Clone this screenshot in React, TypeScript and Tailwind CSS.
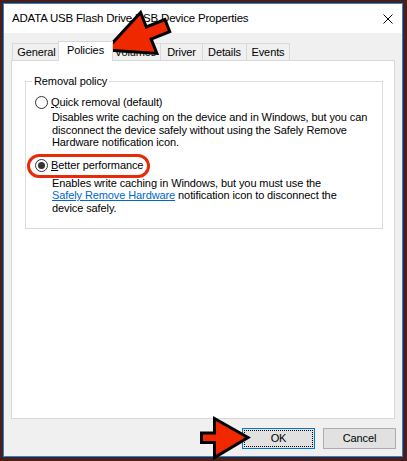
function Radio({ checked }: { checked?: boolean }) {
  return (
    <span className="w-[13px] h-[13px] rounded-full border border-[#333] bg-white flex items-center justify-center shrink-0">
      {checked && <span className="w-[7px] h-[7px] rounded-full bg-[#333]" />}
    </span>
  );
}

const tabs = ["General", "Policies", "Volumes", "Driver", "Details", "Events"];
const tabWidths: Record<string, string> = {
  General: "w-[49px]",
  Volumes: "w-[51px] -ml-px",
  Driver: "w-[43px] -ml-px",
  Details: "w-[45px] -ml-px",
  Events: "w-[44px] -ml-px",
};

export default function App() {
  return (
    <div className="relative w-[407px] h-[461px] bg-[#4b1e1e] pt-[3px] pl-[3px] font-['Liberation_Sans',Arial,sans-serif] text-[11px] tracking-[-0.1px] text-black">
      <div className="w-[400px] h-[454px] border border-[#1c8ad6] bg-[#f0f0f0] flex flex-col">
        {/* title bar */}
        <div className="h-[29px] shrink-0 bg-white flex items-center justify-between pl-[8px] pr-[9px]">
          <span className="text-[11.5px] tracking-[-0.2px] pt-[1px]">ADATA USB Flash Drive USB Device Properties</span>
          <svg width="10" height="10" viewBox="0 0 10 10">
            <path d="M0.5 0.5L9.5 9.5M9.5 0.5L0.5 9.5" stroke="#000" strokeWidth="1" fill="none" />
          </svg>
        </div>

        <div className="flex flex-col px-[7px] pt-[8px]">
          {/* tabs */}
          <div className="flex items-end h-[19px] pl-[1px]">
            {tabs.map((t) =>
              t === "Policies" ? (
                <div
                  key={t}
                  className="relative z-10 w-[55px] h-[20px] -mb-px -ml-[3px] -mr-[2px] bg-white border-t border-l border-r border-[#d9d9d9] flex items-center justify-center pb-[2px]"
                >
                  {t}
                </div>
              ) : (
                <div
                  key={t}
                  className={`${tabWidths[t]} h-[17px] border-t border-l border-r border-[#d9d9d9] flex items-center justify-center`}
                >
                  {t}
                </div>
              )
            )}
          </div>

          {/* tab panel */}
          <div className="h-[359px] w-[384px] border border-[#d9d9d9] bg-white">
            <fieldset className="mt-[13px] ml-[13px] w-[358px] border border-[#dcdcdc] pb-[14px]">
              <legend className="ml-[6px] px-[2px] leading-[14px]">Removal policy</legend>
              <div className="pl-[9px]">
                <div className="mt-[7px] h-[14px] flex items-center gap-[3px]">
                  <Radio />
                  <span>
                    <span className="underline">Q</span>uick removal (default)
                  </span>
                </div>
                <p className="mt-[2px] pl-[17px] leading-[12.5px] whitespace-nowrap">
                  Disables write caching on the device and in Windows, but you can
                  <br />
                  disconnect the device safely without using the Safely Remove
                  <br />
                  Hardware notification icon.
                </p>

                <div className="relative mt-[10px] h-[14px] flex items-center gap-[3px]">
                  <Radio checked />
                  <span>
                    <span className="underline">B</span>etter performance
                  </span>
                  <span className="absolute -left-[8px] -top-[5px] w-[123px] h-[24px] rounded-[12px] border-[3px] border-[#e8290a]" />
                </div>
                <p className="mt-[4px] pl-[17px] leading-[12.5px] whitespace-nowrap">
                  Enables write caching in Windows, but you must use the
                  <br />
                  <span className="text-[#0066cc] underline">Safely Remove Hardware</span> notification icon to disconnect the
                  <br />
                  device safely.
                </p>
              </div>
            </fieldset>
          </div>

          {/* buttons */}
          <div className="mt-[9px] -mr-px flex justify-end gap-[8px]">
            <button className="w-[73px] h-[21px] border border-[#0078d7] bg-[#e1e1e1] p-[1px]">
              <span className="w-full h-full flex items-center justify-center border border-dotted border-black">OK</span>
            </button>
            <button className="w-[73px] h-[21px] border border-[#adadad] bg-[#e1e1e1] flex items-center justify-center">
              Cancel
            </button>
          </div>
        </div>
      </div>

      {/* annotation arrows */}
      <svg className="absolute left-0 top-0 pointer-events-none" width="407" height="461" viewBox="0 0 407 461">
        <polygon
          transform="translate(106 50) rotate(158.3)"
          points="0,0 -46,-22 -46,-6.5 -66,-6.5 -66,6.5 -46,6.5 -46,22"
          fill="#f02800"
          stroke="#000"
          strokeWidth="3"
          strokeLinejoin="miter"
        />
        <polygon
          points="248,437.5 214.5,418.5 214.5,433 201.5,433 201.5,442.5 214.5,442.5 214.5,457.5"
          fill="#f02800"
          stroke="#000"
          strokeWidth="3"
          strokeLinejoin="miter"
        />
      </svg>
    </div>
  );
}
